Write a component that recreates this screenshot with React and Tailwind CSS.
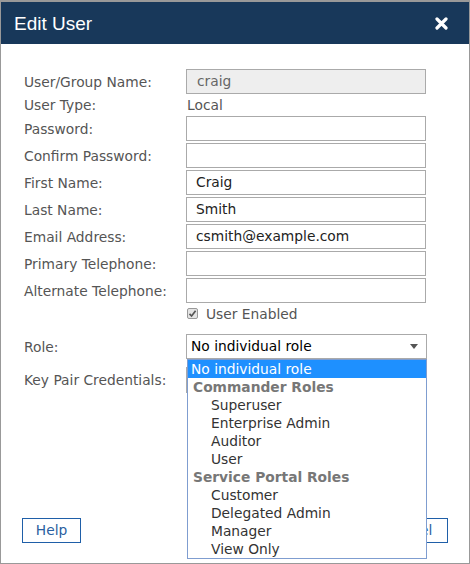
import React from 'react';

const font = { fontFamily: '"DejaVu Sans", Verdana, sans-serif' };

function Field({ value = '', disabled = false }) {
  return (
    <div
      className={`h-[25px] w-[240px] border border-[#aaaaaa] flex items-center pt-[1px] ${disabled ? 'bg-[#eeeeee] text-[#666] pl-[10px]' : 'bg-white text-[#222] pl-[9px]'}`}
    >
      {value}
    </div>
  );
}

function Row({ label, children, className = '' }) {
  return (
    <div className={`flex items-center ${className}`}>
      <div className="w-[162px] shrink-0 text-[#555] pt-[2px]">{label}</div>
      <div className="flex-1">{children}</div>
    </div>
  );
}

const options = [
  { t: 'No individual role', kind: 'sel' },
  { t: 'Commander Roles', kind: 'group' },
  { t: 'Superuser' },
  { t: 'Enterprise Admin' },
  { t: 'Auditor' },
  { t: 'User' },
  { t: 'Service Portal Roles', kind: 'group' },
  { t: 'Customer' },
  { t: 'Delegated Admin' },
  { t: 'Manager' },
  { t: 'View Only' },
];

export default function App() {
  return (
    <div className="w-[470px] h-[564px] bg-white border-t-2 border-x border-b border-[#999] flex flex-col text-[13.8px] leading-none" style={font}>
      <div className="h-[42px] bg-[#18385a] flex items-center justify-between pl-[13px] pr-[21px]">
        <span className="text-white text-[19px] leading-none" style={{ fontFamily: '"Liberation Sans", Arial, sans-serif' }}>Edit User</span>
        <svg width="13" height="13" viewBox="0 0 13 13">
          <path d="M2 2 L11 11 M11 2 L2 11" stroke="#fff" strokeWidth="3.2" strokeLinecap="round" />
        </svg>
      </div>

      <div className="flex-1 flex flex-col px-[23px] pt-[25px]">
        <div className="flex flex-col gap-[2px]">
          <Row label="User/Group Name:"><Field value="craig" disabled /></Row>
          <Row label="User Type:" className="h-[18px]"><span className="text-[#555] pl-[1px] pt-[2px] block">Local</span></Row>
          <Row label="Password:"><Field /></Row>
          <Row label="Confirm Password:"><Field /></Row>
          <Row label="First Name:"><Field value="Craig" /></Row>
          <Row label="Last Name:"><Field value="Smith" /></Row>
          <Row label="Email Address:"><Field value="csmith@example.com" /></Row>
          <Row label="Primary Telephone:"><Field /></Row>
          <Row label="Alternate Telephone:"><Field /></Row>
          <Row label="" className="h-[18px]">
            <div className="flex items-center gap-[8px] pl-[1px]">
              <span className="w-[11px] h-[11px] border border-[#999] bg-[#e4e4e4] rounded-[2px] flex items-center justify-center">
                <svg width="9" height="9" viewBox="0 0 9 9">
                  <path d="M1.5 4.8 L3.6 7 L7.6 1.8" stroke="#555" strokeWidth="1.7" fill="none" />
                </svg>
              </span>
              <span className="text-[#555] pt-[2px]">User Enabled</span>
            </div>
          </Row>
        </div>

        <Row label="Role:" className="mt-[11px]">
          <div className="relative w-[241px]">
            <div className="h-[25px] border border-[#aaaaaa] bg-white flex items-center justify-between pl-[4px] pr-[8px] text-black">
              <span className="pt-[1px]">No individual role</span>
              <svg width="8" height="5" viewBox="0 0 8 5"><path d="M0 0 H8 L4 5 Z" fill="#555" /></svg>
            </div>
            <div className="absolute top-full left-[1px] w-[240px] z-10 bg-white border border-[#7f9dd0]">
              {options.map((o) => (
                <div
                  key={o.t}
                  className={`h-[18px] flex items-center pt-[2px] ${o.kind === 'sel' ? 'bg-[#1e90ff] text-white pl-[3px]' : o.kind === 'group' ? 'font-bold text-[#777] pl-[5px]' : 'text-[#333] pl-[23px]'}`}
                >
                  {o.t}
                </div>
              ))}
            </div>
          </div>
        </Row>

        <Row label="Key Pair Credentials:" className="mt-[8px]">
          <div className="h-[26px] w-[241px] border border-[#aaaaaa] bg-white" />
        </Row>

        <div className="mt-auto pb-[20px] -mx-[2px] flex justify-between">
          <button className="h-[25px] w-[59px] border border-[#1f5fa8] text-[#2a5fa0] bg-white pt-[1px]">Help</button>
          <button className="h-[25px] w-[78px] border border-[#1f5fa8] text-[#2a5fa0] bg-white pt-[1px]">Cancel</button>
        </div>
      </div>
    </div>
  );
}
